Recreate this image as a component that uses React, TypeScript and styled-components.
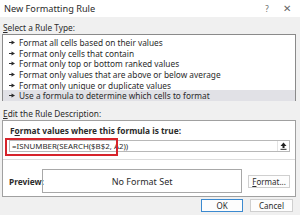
import React from "react";
import styled, { createGlobalStyle } from "styled-components";

const GlobalStyle = createGlobalStyle`
  html, body {
    margin: 0;
    padding: 0;
    background: #f0f0f0;
  }
  * {
    box-sizing: border-box;
  }
`;

const Dialog = styled.div`
  width: 300px;
  height: 215px;
  background: #f0f0f0;
  font-family: "Noto Sans", "Liberation Sans", sans-serif;
  font-size: 8.3px;
  color: #2b2b2b;
  display: flex;
  flex-direction: column;
  overflow: hidden;
`;

const TitleBar = styled.div`
  height: 17px;
  background: #ffffff;
  display: flex;
  align-items: center;
  padding: 0 0 1px 4px;
  font-size: 9.2px;
  color: #2b2b2b;
`;

const Title = styled.span`
  flex: 1;
`;

const TitleButton = styled.span<{ $wide?: boolean }>`
  width: ${(p) => (p.$wide ? "26px" : "14px")};
  text-align: center;
  color: #666;
  font-size: ${(p) => (p.$wide ? "10px" : "8px")};
`;

const Body = styled.div`
  flex: 1;
  display: flex;
  flex-direction: column;
  padding: 0 4px 0 2px;
`;

const SectionLabel = styled.div<{ $top: number }>`
  padding: ${(p) => p.$top}px 0 0 1px;
  height: ${(p) => p.$top + 12}px;
  line-height: 11px;
`;

const Key = styled.span`
  text-decoration: underline;
  text-underline-offset: 1px;
`;

const ListBox = styled.div`
  height: 67px;
  background: #ffffff;
  border: 1px solid #8a8a8a;
  padding: 2px 0 0 0;
  display: flex;
  flex-direction: column;
`;

const ListRow = styled.div<{ $selected?: boolean }>`
  height: 10.7px;
  display: flex;
  align-items: center;
  gap: 4px;
  padding-left: 6px;
  background: ${(p) => (p.$selected ? "#e1e1e6" : "transparent")};
  white-space: nowrap;
`;

const DescBox = styled.div`
  height: 77px;
  background: #ffffff;
  border: 1px solid #a0a0a0;
  display: flex;
  flex-direction: column;
  padding: 3px 5px 0 6px;
  position: relative;
`;

const InnerLabel = styled.div`
  font-weight: 700;
  height: 13px;
  line-height: 13px;
  padding-left: 1px;
`;

const FormulaInput = styled.div`
  height: 12px;
  border: 1px solid #b8b8b8;
  background: #fff;
  display: flex;
  align-items: center;
  padding-left: 2px;
  margin-top: 3px;
`;

const FormulaText = styled.span`
  flex: 1;
  font-size: 7.9px;
`;

const CollapseButton = styled.span`
  width: 12px;
  height: 10px;
  display: flex;
  align-items: center;
  justify-content: center;
  border-left: 1px solid #e4e4e4;
`;

const Highlight = styled.div`
  position: absolute;
  left: 2px;
  top: 17px;
  width: 113px;
  height: 18px;
  border: 2px solid #d7232b;
`;

const Separator = styled.div`
  height: 1px;
  background: #dcdcdc;
  margin: 7px -5px 0 -6px;
`;

const PreviewRow = styled.div`
  display: flex;
  align-items: center;
  margin-top: 9px;
`;

const PreviewLabel = styled.span`
  font-weight: 700;
  width: 33px;
`;

const PreviewBox = styled.div`
  width: 201px;
  height: 24px;
  border: 1px solid #a8a8a8;
  display: flex;
  align-items: center;
  justify-content: center;
  font-size: 9px;
`;

const Button = styled.div<{ $w: number; $focused?: boolean }>`
  width: ${(p) => p.$w}px;
  height: 13px;
  background: #fdfdfd;
  border: 1px solid ${(p) => (p.$focused ? "#3c8ad0" : "#cfcfcf")};
  display: flex;
  align-items: center;
  justify-content: center;
  font-size: 8px;
`;

const FormatButton = styled(Button)`
  margin-left: 6px;
`;

const Footer = styled.div`
  display: flex;
  justify-content: flex-end;
  gap: 7px;
  padding: 2px 3px 0 0;
`;

const Arrow = () => (
  <svg width="6" height="5" viewBox="0 0 6 5">
    <path d="M0 2.5h3" stroke="#2b2b2b" strokeWidth="1" />
    <path d="M2.5 0.5 L6 2.5 L2.5 4.5 Z" fill="#2b2b2b" />
  </svg>
);

const UpIcon = () => (
  <svg width="7" height="8" viewBox="0 0 7 8">
    <path d="M3.5 0.5 L6.5 4 H4.5 V6 H2.5 V4 H0.5 Z" fill="#222" />
    <path d="M0.5 7.3 H6.5" stroke="#222" strokeWidth="1" />
  </svg>
);

const ruleTypes = [
  "Format all cells based on their values",
  "Format only cells that contain",
  "Format only top or bottom ranked values",
  "Format only values that are above or below average",
  "Format only unique or duplicate values",
  "Use a formula to determine which cells to format",
];

export default function App() {
  return (
    <>
      <GlobalStyle />
      <Dialog>
        <TitleBar>
          <Title>New Formatting Rule</Title>
          <TitleButton>?</TitleButton>
          <TitleButton $wide>✕</TitleButton>
        </TitleBar>
        <Body>
          <SectionLabel $top={5}>
            <Key>S</Key>elect a Rule Type:
          </SectionLabel>
          <ListBox>
            {ruleTypes.map((r, i) => (
              <ListRow key={r} $selected={i === ruleTypes.length - 1}>
                <Arrow />
                {r}
              </ListRow>
            ))}
          </ListBox>
          <SectionLabel $top={7}>
            <Key>E</Key>dit the Rule Description:
          </SectionLabel>
          <DescBox>
            <InnerLabel>
              F<Key>o</Key>rmat values where this formula is true:
            </InnerLabel>
            <FormulaInput>
              <FormulaText>=ISNUMBER(SEARCH($B$2, A2))</FormulaText>
              <CollapseButton>
                <UpIcon />
              </CollapseButton>
            </FormulaInput>
            <Highlight />
            <Separator />
            <PreviewRow>
              <PreviewLabel>Preview:</PreviewLabel>
              <PreviewBox>No Format Set</PreviewBox>
              <FormatButton $w={42}>
                <Key>F</Key>ormat...
              </FormatButton>
            </PreviewRow>
          </DescBox>
          <Footer>
            <Button $w={42} $focused>
              OK
            </Button>
            <Button $w={43}>Cancel</Button>
          </Footer>
        </Body>
      </Dialog>
    </>
  );
}
